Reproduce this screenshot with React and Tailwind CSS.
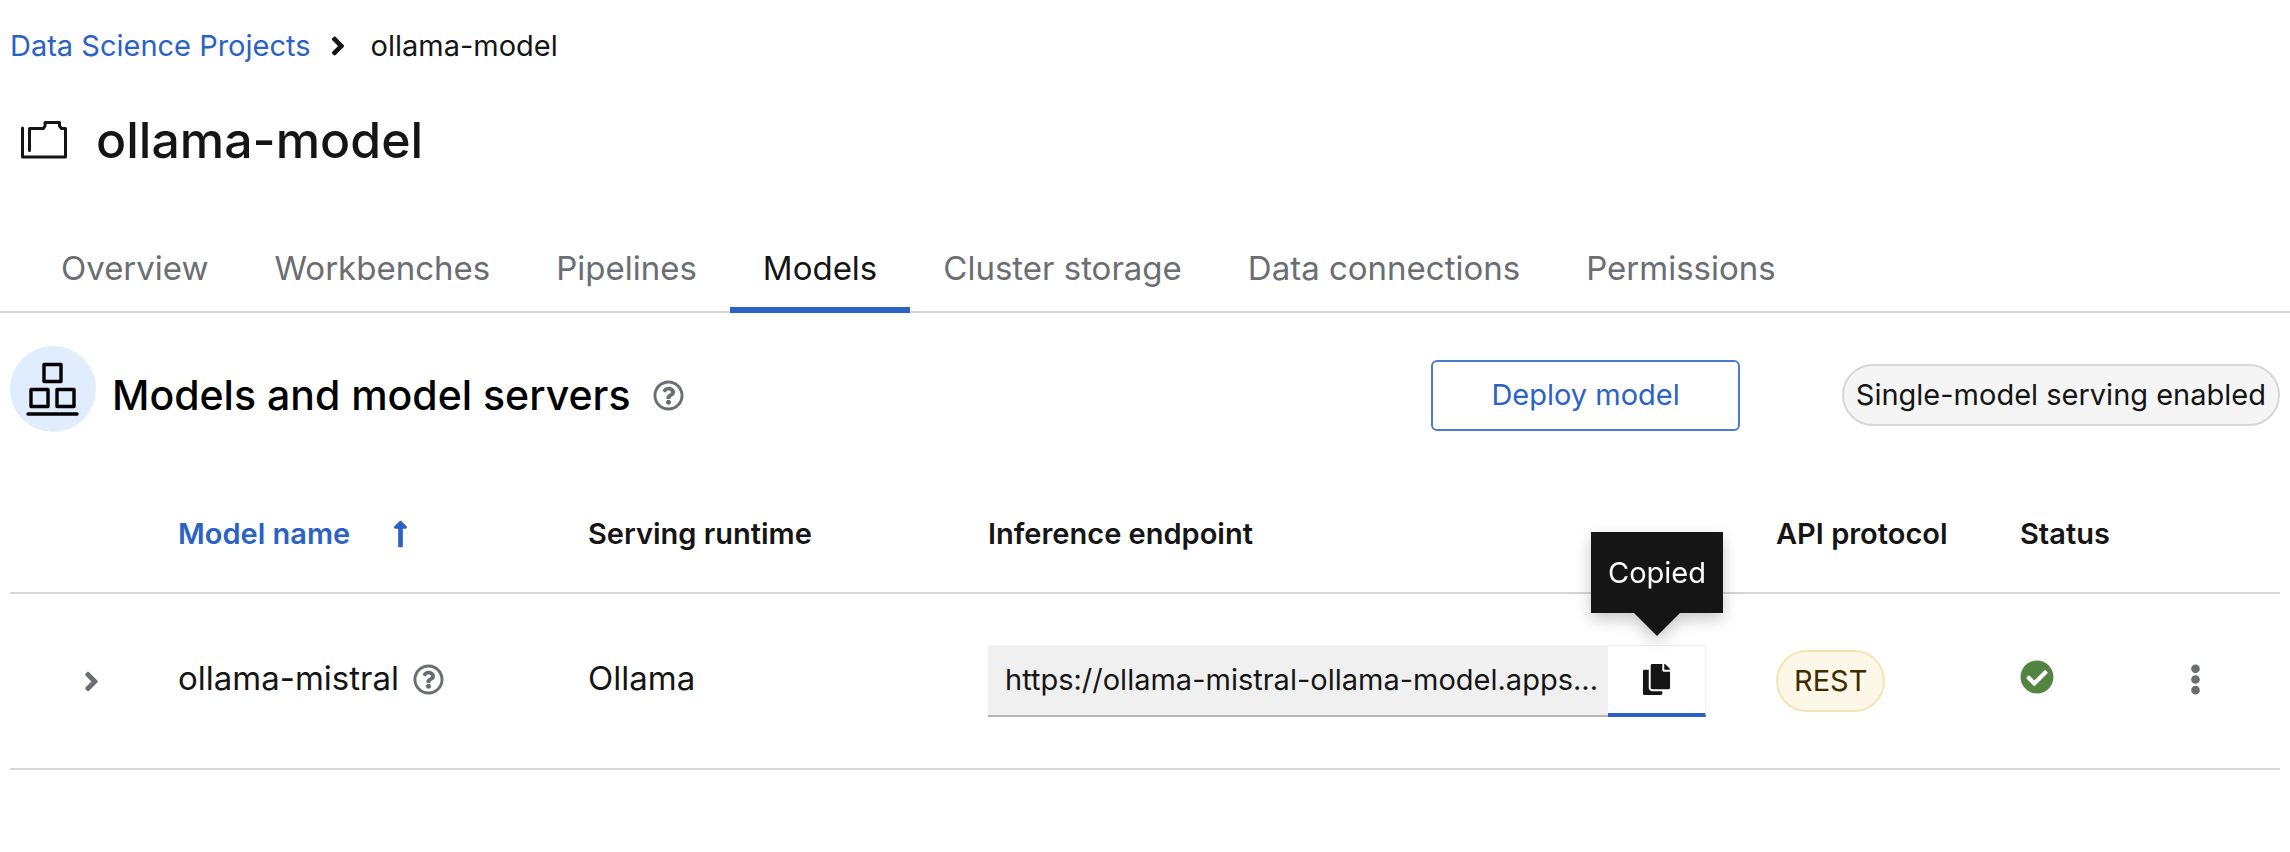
import React from "react";
import {
  FaAngleRight,
  FaCheckCircle,
  FaCopy,
  FaEllipsisV,
  FaLongArrowAltUp,
  FaRegQuestionCircle,
} from "react-icons/fa";

const tabs = [
  "Overview",
  "Workbenches",
  "Pipelines",
  "Models",
  "Cluster storage",
  "Data connections",
  "Permissions",
];

function ProjectIcon() {
  return (
    <svg viewBox="0 0 46 38" className="h-[38px] w-[46px]" fill="none" stroke="#151515" strokeWidth="3" strokeLinejoin="round" strokeLinecap="round" aria-hidden="true">
      <path d="M1.5 7v29H44.5V7.5H40.5L38.5 5V1.5H24V5L22.5 7.5H8.5V29.5" />
    </svg>
  );
}

function ModelsIcon() {
  return (
    <span className="flex size-[86px] shrink-0 self-start rounded-full bg-[#e0edff]">
      <svg viewBox="0 0 86 86" className="size-[86px]" fill="none" stroke="#000" strokeWidth="3.4" strokeLinejoin="round" strokeLinecap="round" aria-hidden="true">
        <rect x="34" y="18.5" width="17" height="17" />
        <rect x="21" y="43.5" width="17" height="17" />
        <rect x="47" y="43.5" width="17" height="17" />
        <path d="M18 68H67" />
      </svg>
    </span>
  );
}

function Breadcrumb() {
  return (
    <nav aria-label="Breadcrumb" className="px-[10px] pt-6">
      <ol className="flex items-center text-[29px] leading-[44px]">
        <li>
          <a href="#projects" className="text-[#2b62c4]">Data Science Projects</a>
        </li>
        <li className="flex items-center">
          <FaAngleRight className="mr-[18px] ml-3 size-[30px]" aria-hidden="true" />
          <span aria-current="page">ollama-model</span>
        </li>
      </ol>
    </nav>
  );
}

function Tabs() {
  return (
    <div role="tablist" className="mt-[50px] flex border-b-2 border-[#d6d6d6] px-7">
      {tabs.map((tab) =>
        tab === "Models" ? (
          <button key={tab} role="tab" aria-selected="true" className="-mb-[2px] border-b-[6px] border-[#2b62c4] px-[33px] pt-6 pb-[15px] text-[33px] leading-[48px]">
            {tab}
          </button>
        ) : (
          <button key={tab} role="tab" aria-selected="false" className="-mb-[2px] border-b-[6px] border-transparent px-[33px] pt-6 pb-[15px] text-[33px] leading-[48px] text-[#6a6e73]">
            {tab}
          </button>
        )
      )}
    </div>
  );
}

function SectionHeader() {
  return (
    <div className="mt-[33px] flex min-h-[98px] items-center px-[10px]">
      <ModelsIcon />
      <h2 className="ml-4 text-[41px] leading-[56px] font-medium text-black">Models and model servers</h2>
      <button aria-label="More info" className="ml-[22px] text-[#6a6e73]">
        <FaRegQuestionCircle className="size-[31px]" />
      </button>
      <button className="ml-auto h-[71px] rounded-md border-2 border-[#4a7bd0] px-[58px] text-[29px] text-[#2b62c4]">
        Deploy model
      </button>
      <span className="ml-[102px] flex h-[62px] items-center rounded-full border-2 border-[#d6d6d6] bg-[#f5f5f5] px-3 text-[29px]">
        Single-model serving enabled
      </span>
    </div>
  );
}

function CopyField() {
  return (
    <div className="flex h-[72px]">
      <input
        aria-label="Inference endpoint"
        readOnly
        value="https://ollama-mistral-ollama-model.apps..."
        className="min-w-0 flex-1 border-b-2 border-[#b4b4b4] bg-[#f0f0f0] pl-[17px] text-[29px] outline-none"
      />
      <div className="relative flex w-[98px]">
        <button aria-label="Copy to clipboard" className="flex flex-1 items-center justify-center border-t border-r border-b-4 border-t-[#f0f0f0] border-r-[#f0f0f0] border-b-[#2b62c4]">
          <FaCopy className="size-[31px]" />
        </button>
        <div role="tooltip" className="absolute bottom-[104px] left-1/2 flex -translate-x-1/2 flex-col items-center drop-shadow-[0_6px_8px_rgba(0,0,0,0.22)]">
          <span className="bg-[#151515] px-[17px] py-[18px] text-[29px] leading-[45px] text-white">Copied</span>
          <svg viewBox="0 0 46 23" className="absolute top-full h-[23px] w-[46px]" aria-hidden="true">
            <path d="M0 0H46L23 23Z" fill="#151515" />
          </svg>
        </div>
      </div>
    </div>
  );
}

function ModelsTable() {
  return (
    <table className="mt-8 w-full table-fixed border-collapse text-left">
      <colgroup>
        <col className="w-[168px]" />
        <col className="w-[410px]" />
        <col className="w-[400px]" />
        <col />
        <col className="w-[244px]" />
        <col className="w-[122px]" />
        <col className="w-[138px]" />
      </colgroup>
      <thead>
        <tr className="h-[117px] border-b-2 border-[#d6d6d6] text-[29px]">
          <td />
          <th scope="col" className="font-semibold">
            <button className="flex items-center gap-[43px] text-[#2b62c4]">
              Model name
              <FaLongArrowAltUp className="h-[30px] w-[15px]" aria-hidden="true" />
            </button>
          </th>
          <th scope="col" className="font-semibold">Serving runtime</th>
          <th scope="col" className="font-semibold">Inference endpoint</th>
          <th scope="col" className="font-semibold">API protocol</th>
          <th scope="col" className="font-semibold">Status</th>
          <td />
        </tr>
      </thead>
      <tbody>
        <tr className="h-[176px] border-b-2 border-[#d6d6d6] text-[33px]">
          <td>
            <button aria-label="Expand row" className="ml-[66px] flex text-[#6a6e73]">
              <FaAngleRight className="size-[31px]" />
            </button>
          </td>
          <td className="pb-1">
            <div className="flex items-center gap-[14px]">
              ollama-mistral
              <button aria-label="Resource names" className="text-[#6a6e73]">
                <FaRegQuestionCircle className="size-[31px]" />
              </button>
            </div>
          </td>
          <td className="pb-1">Ollama</td>
          <td className="pr-[70px]">
            <CopyField />
          </td>
          <td>
            <span className="inline-flex h-[62px] items-center rounded-full border-2 border-[#f6e4b4] bg-[#fdf7e7] px-4 align-middle text-[29px] text-[#3d2c00]">
              REST
            </span>
          </td>
          <td className="pb-2">
            <FaCheckCircle className="size-[34px] text-[#528541]" aria-label="Ready" />
          </td>
          <td className="pb-1">
            <button aria-label="Kebab toggle" className="ml-[38px] flex text-[#6a6e73]">
              <FaEllipsisV className="size-[31px]" />
            </button>
          </td>
        </tr>
      </tbody>
    </table>
  );
}

export default function App() {
  return (
    <div className="min-h-screen bg-white pb-8 font-['Inter',sans-serif] text-[#151515]">
      <Breadcrumb />
      <header className="mt-[42px] flex items-center gap-[29px] pl-[21px]">
        <ProjectIcon />
        <h1 className="text-[50px] leading-[60px] font-medium">ollama-model</h1>
      </header>
      <Tabs />
      <SectionHeader />
      <main className="px-[10px]">
        <ModelsTable />
      </main>
    </div>
  );
}
